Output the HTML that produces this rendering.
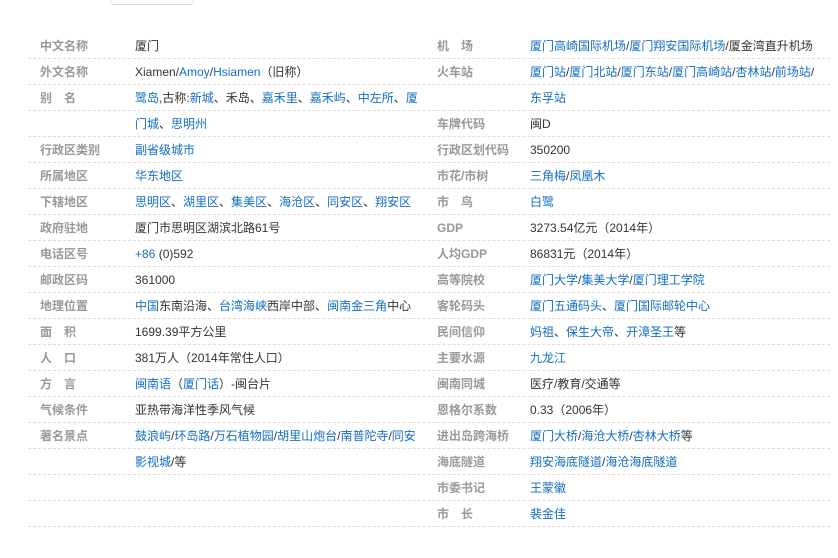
<!DOCTYPE html>
<html><head><meta charset="utf-8"><style>
body{margin:0;width:838px;height:558px;background:#fff;font-family:"Liberation Sans","Noto Sans CJK SC",sans-serif;font-size:12px;color:#333;position:relative;overflow:hidden}
.btn{position:absolute;left:110px;top:-10px;width:82px;height:13px;border:1px solid #ddd;border-radius:3px;background:#fff}
.row{position:absolute;left:28px;width:802px;height:25px;border-bottom:1px dashed #ddd}
.row span{position:absolute;top:0;line-height:26px;white-space:nowrap}
.l{left:12px;color:#999;font-weight:bold}
.v{left:107px}
.r{left:409px;color:#999;font-weight:bold}
.w{left:502px}
a{color:#136ec2;text-decoration:none}
</style></head><body>
<div class="btn"></div>
<div class="row" style="top:33px"><span class="l">中文名称</span><span class="v">厦门</span><span class="r">机　场</span><span class="w"><a>厦门高崎国际机场</a>/<a>厦门翔安国际机场</a>/厦金湾直升机场</span></div>
<div class="row" style="top:59px"><span class="l">外文名称</span><span class="v">Xiamen/<a>Amoy</a>/<a>Hsiamen</a>（旧称）</span><span class="r">火车站</span><span class="w"><a>厦门站</a>/<a>厦门北站</a>/<a>厦门东站</a>/<a>厦门高崎站</a>/<a>杏林站</a>/<a>前场站</a>/</span></div>
<div class="row" style="top:85px"><span class="l">别　名</span><span class="v"><a>鹭岛</a>,古称:<a>新城</a>、禾岛、<a>嘉禾里</a>、<a>嘉禾屿</a>、<a>中左所</a>、<a>厦</a></span><span class="w"><a>东孚站</a></span></div>
<div class="row" style="top:111px"><span class="v"><a>门城</a>、<a>思明州</a></span><span class="r">车牌代码</span><span class="w">闽D</span></div>
<div class="row" style="top:137px"><span class="l">行政区类别</span><span class="v"><a>副省级城市</a></span><span class="r">行政区划代码</span><span class="w">350200</span></div>
<div class="row" style="top:163px"><span class="l">所属地区</span><span class="v"><a>华东地区</a></span><span class="r">市花/市树</span><span class="w"><a>三角梅</a>/<a>凤凰木</a></span></div>
<div class="row" style="top:189px"><span class="l">下辖地区</span><span class="v"><a>思明区</a>、<a>湖里区</a>、<a>集美区</a>、<a>海沧区</a>、<a>同安区</a>、<a>翔安区</a></span><span class="r">市　鸟</span><span class="w"><a>白鹭</a></span></div>
<div class="row" style="top:215px"><span class="l">政府驻地</span><span class="v">厦门市思明区湖滨北路61号</span><span class="r">GDP</span><span class="w">3273.54亿元（2014年）</span></div>
<div class="row" style="top:241px"><span class="l">电话区号</span><span class="v"><a>+86</a> (0)592</span><span class="r">人均GDP</span><span class="w">86831元（2014年）</span></div>
<div class="row" style="top:267px"><span class="l">邮政区码</span><span class="v">361000</span><span class="r">高等院校</span><span class="w"><a>厦门大学</a>/<a>集美大学</a>/<a>厦门理工学院</a></span></div>
<div class="row" style="top:293px"><span class="l">地理位置</span><span class="v"><a>中国</a>东南沿海、<a>台湾海峡</a>西岸中部、<a>闽南金三角</a>中心</span><span class="r">客轮码头</span><span class="w"><a>厦门五通码头</a>、<a>厦门国际邮轮中心</a></span></div>
<div class="row" style="top:319px"><span class="l">面　积</span><span class="v">1699.39平方公里</span><span class="r">民间信仰</span><span class="w"><a>妈祖</a>、<a>保生大帝</a>、<a>开漳圣王</a>等</span></div>
<div class="row" style="top:345px"><span class="l">人　口</span><span class="v">381万人（2014年常住人口）</span><span class="r">主要水源</span><span class="w"><a>九龙江</a></span></div>
<div class="row" style="top:371px"><span class="l">方　言</span><span class="v"><a>闽南语</a>（<a>厦门话</a>）-闽台片</span><span class="r">闽南同城</span><span class="w">医疗/教育/交通等</span></div>
<div class="row" style="top:397px"><span class="l">气候条件</span><span class="v">亚热带海洋性季风气候</span><span class="r">恩格尔系数</span><span class="w">0.33（2006年）</span></div>
<div class="row" style="top:423px"><span class="l">著名景点</span><span class="v"><a>鼓浪屿</a>/<a>环岛路</a>/<a>万石植物园</a>/<a>胡里山炮台</a>/<a>南普陀寺</a>/<a>同安</a></span><span class="r">进出岛跨海桥</span><span class="w"><a>厦门大桥</a>/<a>海沧大桥</a>/<a>杏林大桥</a>等</span></div>
<div class="row" style="top:449px"><span class="v"><a>影视城</a>/等</span><span class="r">海底隧道</span><span class="w"><a>翔安海底隧道</a>/<a>海沧海底隧道</a></span></div>
<div class="row" style="top:475px"><span class="r">市委书记</span><span class="w"><a>王蒙徽</a></span></div>
<div class="row" style="top:501px"><span class="r">市　长</span><span class="w"><a>裴金佳</a></span></div>
</body></html>
